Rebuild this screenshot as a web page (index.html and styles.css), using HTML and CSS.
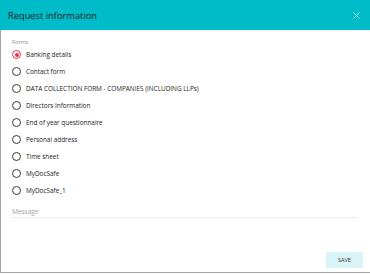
FILE: index.html
```html
<!DOCTYPE html>
<html>
<head>
<meta charset="utf-8">
<link rel="stylesheet" href="styles.css">
</head>
<body>
<div class="dialog">
  <div class="header">
    <span class="title">Request information</span>
    <svg class="close" width="7" height="7" viewBox="0 0 7 7"><path d="M0.5 0.5L6.5 6.5M6.5 0.5L0.5 6.5" stroke="#c8eff2" stroke-width="0.8" fill="none"/></svg>
  </div>
  <div class="body">
    <div class="label">Forms</div>
    <div class="options">
      <div class="option"><span class="radio checked"></span><span>Banking details</span></div>
      <div class="option"><span class="radio"></span><span>Contact form</span></div>
      <div class="option"><span class="radio"></span><span>DATA COLLECTION FORM - COMPANIES (INCLUDING LLPs)</span></div>
      <div class="option"><span class="radio"></span><span>Directors Information</span></div>
      <div class="option"><span class="radio"></span><span>End of year questionnaire</span></div>
      <div class="option"><span class="radio"></span><span>Personal address</span></div>
      <div class="option"><span class="radio"></span><span>Time sheet</span></div>
      <div class="option"><span class="radio"></span><span>MyDocSafe</span></div>
      <div class="option"><span class="radio"></span><span>MyDocSafe_1</span></div>
    </div>
    <div class="message">Message</div>
    <div class="footer"><button class="save">SAVE</button></div>
  </div>
</div>
</body>
</html>
```
FILE: styles.css
```css
html, body {
  margin: 0;
  padding: 0;
  background: #fff;
}
body {
  font-family: "Open Sans", sans-serif;
}
.dialog {
  width: 370px;
  height: 273px;
  display: flex;
  flex-direction: column;
}
.header {
  height: 30px;
  flex: none;
  background: #00bcc8;
  display: flex;
  align-items: center;
  justify-content: space-between;
  padding: 0 10px 0 8px;
}
.title {
  font-size: 9.3px;
  color: #1c1c1c;
}
.close {
  display: block;
}
.body {
  flex: 1;
  border-left: 1px solid #a3a3a3;
  border-bottom: 1px solid #a3a3a3;
  display: flex;
  flex-direction: column;
  padding: 8px 12px 0 11px;
}
.label {
  font-size: 5.5px;
  line-height: 8px;
  color: #8a8a8a;
}
.options {
  display: flex;
  flex-direction: column;
}
.option {
  height: 17px;
  display: flex;
  align-items: center;
  gap: 5px;
  font-size: 6.4px;
  color: #222;
}
.radio {
  width: 9px;
  height: 9px;
  box-sizing: border-box;
  border: 1px solid #3a3a3a;
  border-radius: 50%;
  flex: none;
  position: relative;
}
.radio.checked {
  border-color: #e8334a;
}
.radio.checked::after {
  content: "";
  position: absolute;
  left: 1.5px;
  top: 1.5px;
  width: 4px;
  height: 4px;
  border-radius: 50%;
  background: #e8334a;
}
.message {
  margin-top: 7px;
  font-size: 6.5px;
  line-height: 11px;
  color: #a5a5a5;
  border-bottom: 1px solid #ececec;
}
.footer {
  margin-top: auto;
  display: flex;
  justify-content: flex-end;
  padding: 0 0 4px 0;
  margin-right: -5px;
}
.save {
  width: 37px;
  height: 16px;
  border: none;
  background: #d8f4f6;
  font-family: "Open Sans", sans-serif;
  font-size: 5.5px;
  color: #333;
  padding: 0;
}
```
